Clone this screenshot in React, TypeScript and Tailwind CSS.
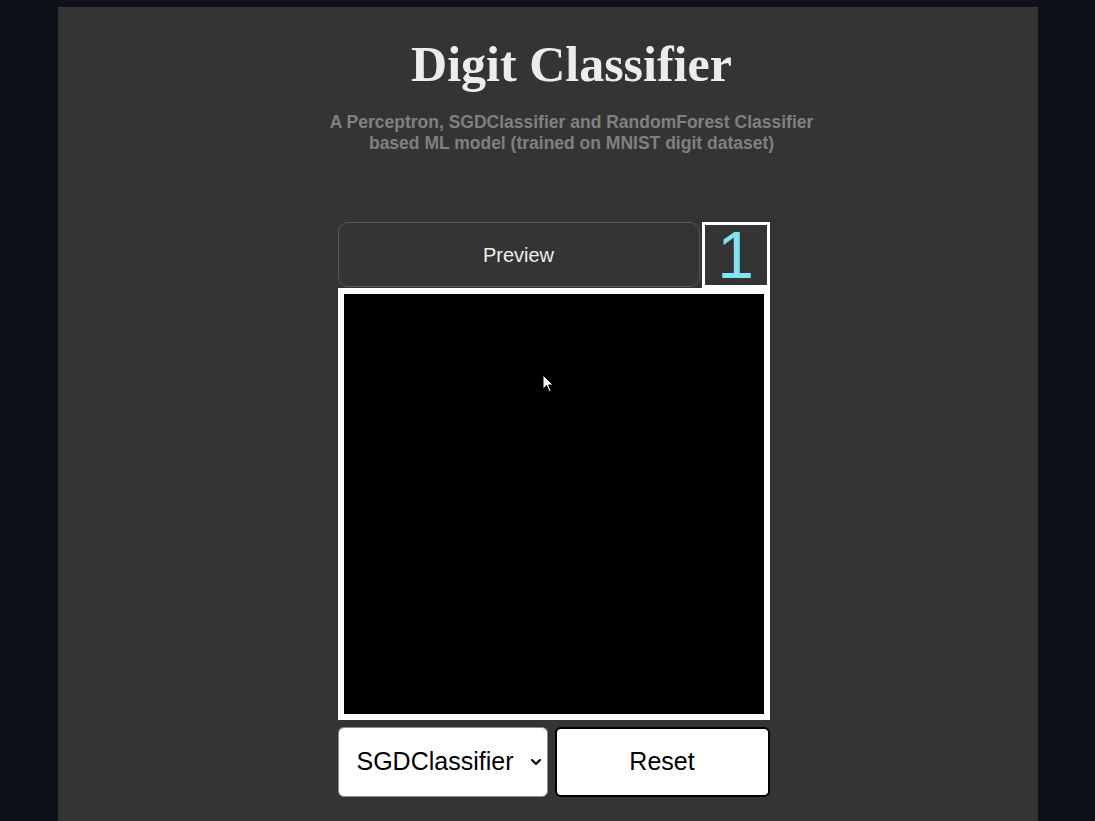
import { ChevronDown } from "lucide-react";

const App = () => {
  return (
    <div className="min-h-screen bg-[#0e1118] pt-[7px] font-['Liberation_Sans',Arial,sans-serif]">
      <div className="mx-auto w-[980px] min-h-[814px] bg-[#343434] pt-[32px] pb-[40px]">
        {/* Header */}
        <div className="pl-[48px] text-center">
          <h1 className="font-['Liberation_Serif','Times_New_Roman',serif] text-[50px] font-bold leading-none text-[#ececec]">
            Digit Classifier
          </h1>
          <p className="mt-[23px] text-[17.5px] font-bold leading-[21px] text-[#808080]">
            A Perceptron, SGDClassifier and RandomForest Classifier
            <br />
            based ML model (trained on MNIST digit dataset)
          </p>
        </div>

        {/* Drawing area */}
        <div className="ml-[280px] mt-[68px] w-[432px]">
          <div className="flex gap-[2px]">
            <button className="h-[65px] w-[362px] rounded-[10px] border border-[#575757] bg-[#343434] text-[20px] text-[#eeeeee]">
              Preview
            </button>
            <div className="flex h-[66px] w-[68px] items-center justify-center border-[3px] border-white text-[66px] leading-none text-[#7fe6f2]">
              1
            </div>
          </div>
          <div className="relative h-[432px] w-[432px] border-[6px] border-white bg-black">
            <svg className="absolute left-[198px] top-[80px]" width="12" height="19" viewBox="0 0 12 19">
              <path d="M1 1 L1 15 L4.5 11.5 L7 17.5 L9 16.7 L6.6 11 L11 11 Z" fill="white" stroke="black" strokeWidth="1" />
            </svg>
          </div>
          <div className="mt-[7px] flex gap-[7px]">
            <div className="flex h-[70px] w-[210px] items-center justify-between rounded-[6px] border border-[#8a8a8a] bg-white pl-[18px] pr-[3px] text-[25px] text-black">
              <span>SGDClassifier</span>
              <ChevronDown size={16} strokeWidth={3} />
            </div>
            <button className="h-[70px] w-[215px] rounded-[6px] border-2 border-black bg-white text-[25px] text-black">
              Reset
            </button>
          </div>
        </div>
      </div>
    </div>
  );
};

export default App;
